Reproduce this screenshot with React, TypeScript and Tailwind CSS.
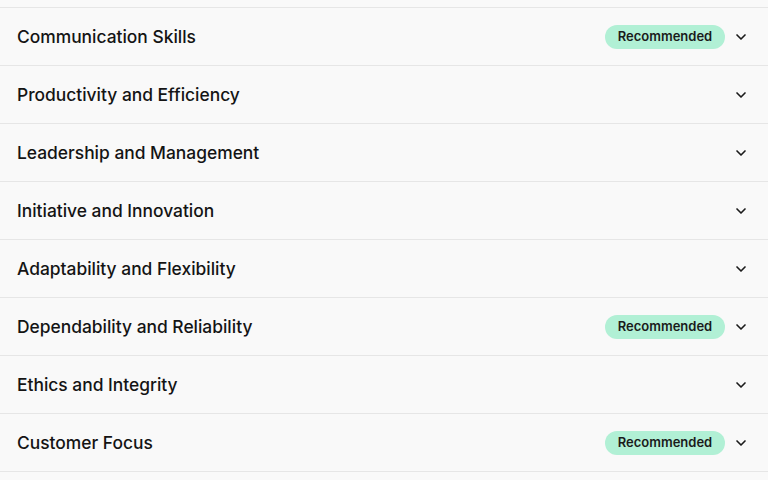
import { ChevronDown } from "lucide-react";

const ITEMS: { title: string; recommended?: boolean }[] = [
  { title: "Communication Skills", recommended: true },
  { title: "Productivity and Efficiency" },
  { title: "Leadership and Management" },
  { title: "Initiative and Innovation" },
  { title: "Adaptability and Flexibility" },
  { title: "Dependability and Reliability", recommended: true },
  { title: "Ethics and Integrity" },
  { title: "Customer Focus", recommended: true },
];

export default function App() {
  return (
    <div
      className="h-[480px] w-[768px] overflow-hidden bg-[#f9f9f9] text-[#141414]"
      style={{ fontFamily: "Inter, 'Noto Sans', sans-serif" }}
    >
      <div className="h-[7px]" />
      {ITEMS.map((item) => (
        <div
          key={item.title}
          className="flex h-[58px] items-center border-t border-[#e6e6e6] pl-[17px] pr-[19px] pt-px"
        >
          <span className="flex-1 text-[17.4px] font-medium">{item.title}</span>
          {item.recommended && (
            <span className="mr-[8px] flex h-[24px] w-[120px] items-center justify-center rounded-full bg-[#b1f0d5] text-[13px] font-semibold text-[#1b1b1b]">
              Recommended
            </span>
          )}
          <ChevronDown className="h-[16px] w-[16px] text-[#1b1b1b]" strokeWidth={2.5} />
        </div>
      ))}
      <div className="border-t border-[#e6e6e6]" />
    </div>
  );
}
